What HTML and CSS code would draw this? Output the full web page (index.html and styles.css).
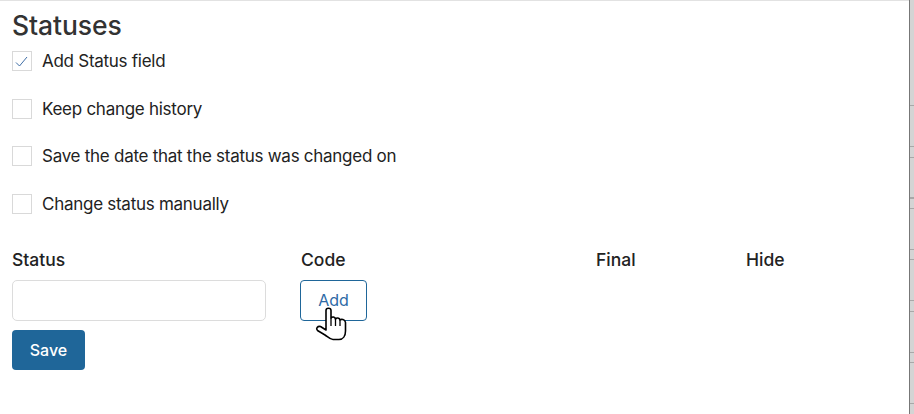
FILE: index.html
```html
<!DOCTYPE html>
<html lang="en">
  <head>
    <meta charset="UTF-8" />
    <title>Statuses</title>
    <link rel="stylesheet" href="styles.css">
  </head>
  <body>
    <main class="page">
      <h1>Statuses</h1>
      <div class="options">
        <label class="option">
          <span class="box">
            <svg width="18" height="18" viewBox="0 0 18 18"><path d="M3 10.5 L6.5 14 L14 5" fill="none" stroke="#3f6ea6" stroke-width="1" /></svg>
          </span>
          Add Status field
        </label>
        <label class="option"><span class="box"></span>Keep change history</label>
        <label class="option"><span class="box"></span>Save the date that the status was changed on</label>
        <label class="option"><span class="box"></span>Change status manually</label>
      </div>

      <div class="columns">
        <div class="th status">Status</div>
        <div class="th code">Code</div>
        <div class="th final">Final</div>
        <div class="th">Hide</div>
      </div>

      <div class="add-row">
        <input type="text" class="status-input" />
        <button class="add">Add</button>
        <svg class="cursor" width="34" height="36" viewBox="0 0 34 36">
          <path d="M12 21 L12 4.5 C12 1.5 17 1.5 17 4.5 L17 12 C18 10.5 21 10.5 21.5 13 C22.5 11.5 25.5 11.5 26 14 C27 13 31 13 31.5 16.5 L31.5 25 C31.5 30 29 33.5 25 33.5 L19 33.5 C16 33.5 14 31 11 29 L3.5 24.5 C1.5 22.5 3.5 20 6.5 20.5 L12 24 Z" fill="#ffffff" stroke="#000000" stroke-width="1.6" stroke-linejoin="round" />
          <path d="M17 12 L17 20 M21.5 13 L21.5 20 M26 14 L26 20" fill="none" stroke="#000000" stroke-width="1.3" />
        </svg>
      </div>

      <button class="primary">Save</button>
    </main>
    <div class="edge"><div class="ticks"></div></div>
  </body>
</html>
```

FILE: styles.css
```css
html,
body {
  margin: 0;
  height: 100%;
}

body {
  display: flex;
  height: 414px;
  overflow: hidden;
  background: #ffffff;
  color: #222222;
  font-family: Inter, "Liberation Sans", sans-serif;
  font-size: 17px;
  letter-spacing: -0.27px;
}

/* page */
.page {
  flex: 1;
  padding: 9px 12px 0;
  border-top: 1px solid #e2e2e2;
}

h1 {
  margin: 0;
  font-size: 26.5px;
  font-weight: 500;
  line-height: 30px;
  letter-spacing: -0.1px;
  color: #333333;
}

.options {
  display: flex;
  flex-direction: column;
  gap: 27.5px;
  margin-top: 11px;
}

.option {
  display: flex;
  align-items: center;
  gap: 10px;
  height: 20px;
}

.box {
  display: block;
  width: 20px;
  height: 20px;
  box-sizing: border-box;
  border: 1px solid #d9d9d9;
}

.box svg {
  display: block;
}

.columns {
  display: flex;
  margin-top: 36px;
  font-size: 17.5px;
  font-weight: 500;
  line-height: 20px;
  letter-spacing: 0;
}

.th.status {
  width: 289px;
}

.th.code {
  width: 295px;
}

.th.final {
  width: 150px;
}

.add-row {
  position: relative;
  display: flex;
  gap: 34px;
  margin-top: 10px;
}

.status-input {
  width: 254px;
  height: 41px;
  box-sizing: border-box;
  background: #ffffff;
  border: 1px solid #dcdcdc;
  border-radius: 5px;
}

button {
  font-family: inherit;
  font-size: 16px;
  border-radius: 4px;
}

.add {
  width: 67px;
  height: 41px;
  padding: 0;
  color: #2e6aa6;
  background: #ffffff;
  border: 1px solid #1f6699;
}

.cursor {
  position: absolute;
  left: 302px;
  top: 26px;
}

.primary {
  display: block;
  width: 73px;
  height: 40px;
  margin-top: 9px;
  padding: 0;
  color: #ffffff;
  background: #1f6699;
  border: 0;
  font-weight: 500;
}

/* strip of the window behind */
.edge {
  width: 4px;
  border-left: 1px solid #777777;
  background: #d4d4d4;
}

.ticks {
  height: 309px;
  margin-top: 105px;
  background: repeating-linear-gradient(#a8a8a8 0, #a8a8a8 1px, #d4d4d4 1px, #d4d4d4 41px, #a8a8a8 41px, #a8a8a8 42px, #d4d4d4 42px, #d4d4d4 51.5px);
}
```
